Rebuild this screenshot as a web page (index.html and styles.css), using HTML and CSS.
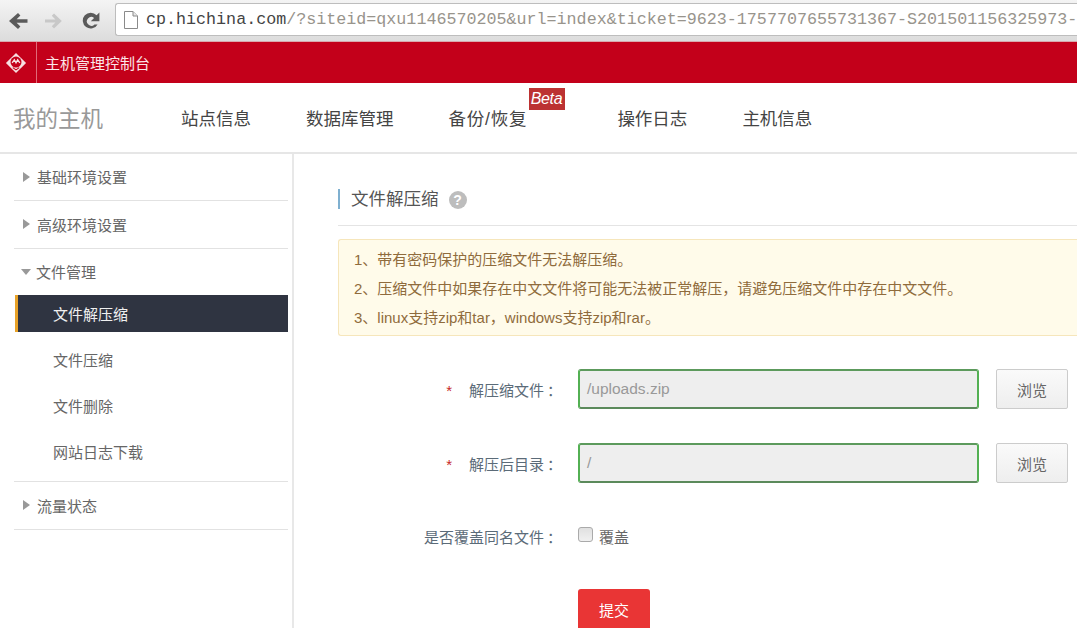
FILE: index.html
```html
<!DOCTYPE html>
<html lang="zh">
<head>
<meta charset="utf-8">
<title>文件解压缩</title>
<link rel="stylesheet" href="styles.css">
</head>
<body>
<div class="page">
  <div class="chrome">
    <svg class="nav-icon back" viewBox="0 0 20 20" width="20" height="20"><path d="M19.500 8.200H8.600l3.800-3.800L10 2 1 10l9 8 2.400-2.400-3.800-3.800h10.900z" fill="#5a5a5a"/></svg>
    <svg class="nav-icon fwd" viewBox="0 0 20 20" width="20" height="20"><path d="M1 8.400h10.400L7.800 4.800 10 2.600l7.800 7.400-7.800 7.400-2.200-2.200 3.600-3.600H1z" fill="#c8c8c8"/></svg>
    <svg class="nav-icon reload" viewBox="0 0 20 20" width="20" height="20"><path d="M16.600 13.400A7.900 7.900 0 1 1 15.600 4.300L18.400 1.500v8.700H9.800l3.300-3.300a4.400 4.400 0 1 0 .4 6.500z" fill="#5a5a5a"/></svg>
    <div class="omnibox">
      <svg class="page-icon" viewBox="0 0 16 20" width="16" height="20"><path d="M1.500 1.500h8.500l4.500 4.500v12.500h-13z" fill="#fff" stroke="#8a8a8a"/><path d="M10 1.500V6h4.500" fill="#e8e8e8" stroke="#8a8a8a"/></svg>
      <span class="url"><span class="host">cp.hichina.com</span>/?siteid=qxu1146570205&amp;url=index&amp;ticket=9623-1757707655731367-S201501156325973-</span>
    </div>
  </div>
  <header class="topbar">
    <div class="logo-cell">
      <svg viewBox="0 0 24 24" width="22" height="22"><path d="M12 1L23 12 12 23 1 12z" fill="#f7dfe0"/><circle cx="12" cy="11" r="6" fill="#c4001a"/><path d="M7.800 11.800l2.400-3.300 1.800 3.300 1.800-3.300 2.400 3.300" fill="none" stroke="#f7dfe0" stroke-width="1.500"/><path d="M8.500 17l3.500 2.500 3.500-2.500" fill="none" stroke="#c4001a" stroke-width="1.200"/></svg>
    </div>
    <div class="topbar-title">主机管理控制台</div>
  </header>
  <nav class="mainnav">
    <div class="brand">我的主机</div>
    <a class="nav-item nav-a">站点信息</a>
    <a class="nav-item nav-b">数据库管理</a>
    <a class="nav-item nav-c">备份/恢复<span class="beta">Beta</span></a>
    <a class="nav-item nav-d">操作日志</a>
    <a class="nav-item nav-e">主机信息</a>
  </nav>
  <div class="body">
    <aside class="sidebar">
      <div class="group first"><div class="group-title"><i class="tri right"></i>基础环境设置</div></div>
      <div class="group"><div class="group-title"><i class="tri right"></i>高级环境设置</div></div>
      <div class="group open">
        <div class="group-title"><i class="tri down"></i>文件管理</div>
        <a class="sub active">文件解压缩</a>
        <a class="sub">文件压缩</a>
        <a class="sub">文件删除</a>
        <a class="sub">网站日志下载</a>
      </div>
      <div class="group"><div class="group-title"><i class="tri right"></i>流量状态</div></div>
    </aside>
    <main class="content">
      <div class="section-head">
        <h2 class="section-title">文件解压缩</h2>
        <span class="help">?</span>
      </div>
      <div class="notice">
        <p>1、带有密码保护的压缩文件无法解压缩。</p>
        <p>2、压缩文件中如果存在中文文件将可能无法被正常解压，请避免压缩文件中存在中文文件。</p>
        <p>3、linux支持zip和tar，windows支持zip和rar。</p>
      </div>
      <form class="form">
        <div class="row">
          <label class="label"><span class="req">*</span>解压缩文件<span class="colon">：</span></label>
          <div class="input">/uploads.zip</div>
          <button type="button" class="browse">浏览</button>
        </div>
        <div class="row">
          <label class="label"><span class="req">*</span>解压后目录<span class="colon">：</span></label>
          <div class="input">/</div>
          <button type="button" class="browse">浏览</button>
        </div>
        <div class="row check-row">
          <label class="label">是否覆盖同名文件<span class="colon">：</span></label>
          <span class="checkbox"></span><span class="check-text">覆盖</span>
        </div>
        <div class="submit-row">
          <button type="button" class="submit">提交</button>
        </div>
      </form>
    </main>
  </div>
</div>
</body>
</html>
```
FILE: styles.css
```css
* { box-sizing: border-box; }
html, body { margin: 0; padding: 0; height: 100%; background: #fff; }
body { font-family: "Liberation Sans", "Noto Sans CJK SC", sans-serif; color: #555; overflow: hidden; }
.page { width: 1077px; height: 628px; overflow: hidden; }

.chrome { height: 42px; display: flex; align-items: center; background: linear-gradient(#f4f4f4, #dcdcdc); border-bottom: 1px solid #d9a9ad; padding-left: 8px; }
.nav-icon { flex: none; }
.fwd { margin-left: 16px; }
.reload { margin-left: 17px; }
.omnibox { flex: 1; min-width: 0; height: 33px; margin-left: 14px; margin-top: -2px; background: #fff; border: 1px solid #bdbdbd; border-right: 0; border-radius: 3px 0 0 3px; display: flex; align-items: center; padding-left: 7px; overflow: hidden; }
.page-icon { flex: none; }
.url { margin-left: 7px; font-family: "Liberation Mono", "DejaVu Sans Mono", monospace; font-size: 16.700px; color: #98948c; white-space: nowrap; }
.host { color: #444; }

.topbar { height: 41px; background: #c3001a; display: flex; align-items: center; color: #fbe6e8; }
.logo-cell { width: 37px; height: 100%; border-right: 1px solid #e06a78; display: flex; align-items: center; justify-content: center; padding-right: 5px; }
.topbar-title { margin-left: 8px; font-size: 15px; }

.mainnav { height: 71px; border-bottom: 2px solid #e6e6e6; display: flex; align-items: center; padding-bottom: 1px; }
.brand { width: 181px; padding-left: 13px; font-size: 22.500px; color: #999; flex: none; }
.nav-item { font-size: 17.500px; color: #444; position: relative; flex: none; }
.nav-b { margin-left: 55px; }
.nav-c { margin-left: 55px; letter-spacing: 0.800px; }
.nav-d { margin-left: 90px; }
.nav-e { margin-left: 55px; }
.beta { position: absolute; left: 80px; top: -17px; width: 36px; height: 22px; background: #bc3232; color: #fff; font-style: italic; font-size: 16px; line-height: 22px; text-align: center; letter-spacing: -0.300px; }

.body { display: flex; height: 474px; }
.sidebar { width: 294px; flex: none; border-right: 2px solid #e8e8e8; padding: 0 4px 0 15px; }
.group { border-bottom: 1px solid #e2e2e2; margin-left: -1px; }
.group-title { height: 47px; display: flex; align-items: center; font-size: 15px; color: #666; padding: 0 0 1px 9px; }
.first .group-title { height: 46px; }
.tri { width: 0; height: 0; display: block; flex: none; border-style: solid; border-color: transparent; }
.tri.right { border-width: 5px 0 5px 7px; border-left-color: #999; margin-right: 7px; }
.tri.down { border-width: 6px 5.500px 0 5.500px; border-top-color: #999; margin-left: -2px; margin-right: 5px; }
.open { padding-bottom: 6px; }
.open .group-title { height: 46px; }
.sub { display: flex; align-items: center; height: 46px; padding: 0 0 2px 38px; font-size: 15px; color: #666; margin-left: 1px; }
.sub.active { height: 37px; margin-bottom: 5px; background: #2f3441; border-left: 3px solid #e8a228; padding: 0 0 1px 35px; color: #f0f0f0; }

.content { flex: 1; min-width: 0; padding: 0 0 0 44px; }
.section-head { height: 72px; display: flex; align-items: center; border-bottom: 1px solid #e4e4e4; padding-top: 18px; }
.section-title { margin: 0; font-weight: normal; font-size: 17.500px; color: #555; border-left: 2px solid #7fb0d0; padding-left: 11px; height: 20px; line-height: 20px; }
.help { width: 18px; height: 18px; margin-left: 10px; margin-top: 2px; border-radius: 50%; background: #bdbdbd; color: #fff; font-size: 14px; font-weight: bold; line-height: 18px; text-align: center; }
.notice { margin-top: 13px; height: 97px; background: #fffbea; border: 1px solid #f6e6bb; border-right: 0; border-radius: 3px 0 0 3px; padding: 5px 0 0 15px; color: #8f6b3c; font-size: 15px; }
.notice p { margin: 0; height: 29px; line-height: 29px; white-space: nowrap; }

.form { margin-top: 32.600px; }
.row { display: flex; align-items: center; height: 41px; margin-bottom: 33px; }
.label { width: 224px; flex: none; padding-right: 3px; text-align: right; font-size: 15px; color: #5b6b78; }
.colon { margin-left: 3px; margin-right: -3px; }
.req { color: #c62828; margin-right: 17px; font-size: 15px; }
.input { width: 401px; height: 40px; flex: none; margin-left: 16px; background: #eeeeee; border: 2px solid #53b053; border-top-color: #5c9a5c; border-bottom-color: #5b8a5b; border-radius: 3px; padding-left: 7px; line-height: 36px; font-size: 15.500px; color: #999; }
.browse { width: 72px; height: 40px; margin-left: 17px; flex: none; background: linear-gradient(#fafafa, #eeeeee); border: 1px solid #cccccc; border-radius: 2px; color: #666; font-size: 15px; font-family: inherit; }
.check-row { height: 30px; margin-bottom: 0; margin-top: 38.400px; }
.checkbox { width: 15px; height: 15px; margin-left: 16px; margin-top: -5px; flex: none; background: linear-gradient(#e0e0e0, #f0f0f0); border: 1px solid #aaa; border-radius: 3px; }
.check-text { margin-left: 6px; font-size: 15px; color: #666; }
.submit-row { margin-top: 37px; padding-left: 240px; }
.submit { display: block; width: 72px; height: 41px; background: #e93535; border: 0; border-radius: 3px; color: #fff; font-size: 15px; font-family: inherit; }
```
